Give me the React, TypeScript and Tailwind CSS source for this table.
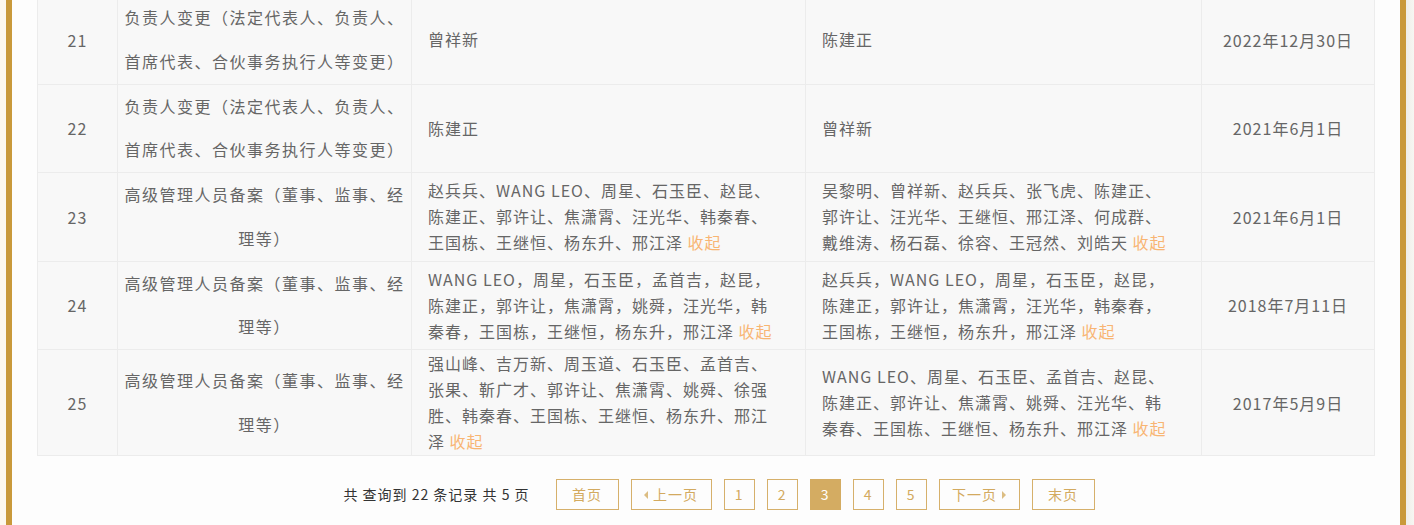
import React from 'react';

type Row = {
  no: number;
  item: string[];
  before: string[];
  after: string[];
  date: string;
  fold?: boolean;
};

const rows: Row[] = [
  {
    no: 21,
    item: ['负责人变更（法定代表人、负责人、', '首席代表、合伙事务执行人等变更）'],
    before: ['曾祥新'],
    after: ['陈建正'],
    date: '2022年12月30日',
  },
  {
    no: 22,
    item: ['负责人变更（法定代表人、负责人、', '首席代表、合伙事务执行人等变更）'],
    before: ['陈建正'],
    after: ['曾祥新'],
    date: '2021年6月1日',
  },
  {
    no: 23,
    item: ['高级管理人员备案（董事、监事、经', '理等）'],
    before: ['赵兵兵、WANG LEO、周星、石玉臣、赵昆、', '陈建正、郭许让、焦潇霄、汪光华、韩秦春、', '王国栋、王继恒、杨东升、邢江泽'],
    after: ['吴黎明、曾祥新、赵兵兵、张飞虎、陈建正、', '郭许让、汪光华、王继恒、邢江泽、何成群、', '戴维涛、杨石磊、徐容、王冠然、刘皓天'],
    date: '2021年6月1日',
    fold: true,
  },
  {
    no: 24,
    item: ['高级管理人员备案（董事、监事、经', '理等）'],
    before: ['WANG LEO，周星，石玉臣，孟首吉，赵昆，', '陈建正，郭许让，焦潇霄，姚舜，汪光华，韩', '秦春，王国栋，王继恒，杨东升，邢江泽'],
    after: ['赵兵兵，WANG LEO，周星，石玉臣，赵昆，', '陈建正，郭许让，焦潇霄，汪光华，韩秦春，', '王国栋，王继恒，杨东升，邢江泽'],
    date: '2018年7月11日',
    fold: true,
  },
  {
    no: 25,
    item: ['高级管理人员备案（董事、监事、经', '理等）'],
    before: ['强山峰、吉万新、周玉道、石玉臣、孟首吉、', '张果、靳广才、郭许让、焦潇霄、姚舜、徐强', '胜、韩秦春、王国栋、王继恒、杨东升、邢江', '泽'],
    after: ['WANG LEO、周星、石玉臣、孟首吉、赵昆、', '陈建正、郭许让、焦潇霄、姚舜、汪光华、韩', '秦春、王国栋、王继恒、杨东升、邢江泽'],
    date: '2017年5月9日',
    fold: true,
  },
];

function Names({ lines, fold }: { lines: string[]; fold?: boolean }) {
  return (
    <div className="leading-[26px]">
      {lines.map((l, i) => (
        <div key={i} className="whitespace-nowrap">
          {l}
          {fold && i === lines.length - 1 && <span className="text-[#f8b573]"> 收起</span>}
        </div>
      ))}
    </div>
  );
}

function PageBtn({ children, active, w = 'w-[31px]' }: { children: React.ReactNode; active?: boolean; w?: string }) {
  return (
    <button
      className={
        'h-[31px] flex items-center justify-center gap-[5px] text-[14px] tracking-[1px] border ' +
        w +
        (active ? ' bg-[#d4ac62] border-[#d4ac62] text-white' : ' border-[#d6b06b] text-[#d3aa5f] bg-transparent')
      }
    >
      {children}
    </button>
  );
}

export default function App() {
  return (
    <div
      className="w-[1414px] h-[525px] overflow-hidden flex bg-[#fdf8ee] text-[16px] tracking-[1px] text-[#666]"
      style={{ fontFamily: '"Noto Sans CJK SC", "Noto Sans", sans-serif' }}
    >
      <div className="w-[6px] shrink-0" />
      <div className="w-[6px] shrink-0 bg-[#c9993a]" />
      <main className="w-[1388px] shrink-0 bg-[#fdfdfd] px-[25px]">
        <table className="-mt-[5px] w-[1337px] border-collapse table-fixed">
          <colgroup>
            <col className="w-[80px]" />
            <col className="w-[294px]" />
            <col className="w-[394px]" />
            <col className="w-[396px]" />
            <col className="w-[173px]" />
          </colgroup>
          <tbody>
            {rows.map((r) => (
              <tr key={r.no} className="bg-[#f8f8f8]">
                <td className="border border-[#ececec] text-center align-middle p-0">{r.no}</td>
                <td className="border border-[#ececec] text-center align-middle py-0 px-[6px] leading-[43.75px] tracking-[1.5px]">
                  {r.item.map((l, i) => (
                    <div key={i} className="whitespace-nowrap">{l}</div>
                  ))}
                </td>
                <td className="border border-[#ececec] align-middle pt-0 pb-px pl-[16px] pr-2">
                  <Names lines={r.before} fold={r.fold} />
                </td>
                <td className="border border-[#ececec] align-middle pt-0 pb-px pl-[16px] pr-2">
                  <Names lines={r.after} fold={r.fold} />
                </td>
                <td className="border border-[#ececec] text-center align-middle p-0">{r.date}</td>
              </tr>
            ))}
          </tbody>
        </table>

        <div className="mt-[23px] flex items-center justify-center pl-[26px] gap-[12px]">
          <span className="text-[14px] text-[#333] mr-[14px]">共 查询到 22 条记录 共 5 页</span>
          <PageBtn w="w-[63px]">首页</PageBtn>
          <PageBtn w="w-[81px]">
            <span className="w-0 h-0 border-y-[4px] border-y-transparent border-r-[4px] border-r-[#dcbd82]" />
            上一页
          </PageBtn>
          <PageBtn>1</PageBtn>
          <PageBtn>2</PageBtn>
          <PageBtn active>3</PageBtn>
          <PageBtn>4</PageBtn>
          <PageBtn>5</PageBtn>
          <PageBtn w="w-[81px]">
            下一页
            <span className="w-0 h-0 border-y-[4px] border-y-transparent border-l-[4px] border-l-[#dcbd82]" />
          </PageBtn>
          <PageBtn w="w-[63px]">末页</PageBtn>
        </div>
      </main>
      <div className="w-[6px] shrink-0 bg-[#c9993a]" />
      <div className="flex-1 bg-gradient-to-r from-[#efeee9] to-[#f7f6f2]" />
    </div>
  );
}
